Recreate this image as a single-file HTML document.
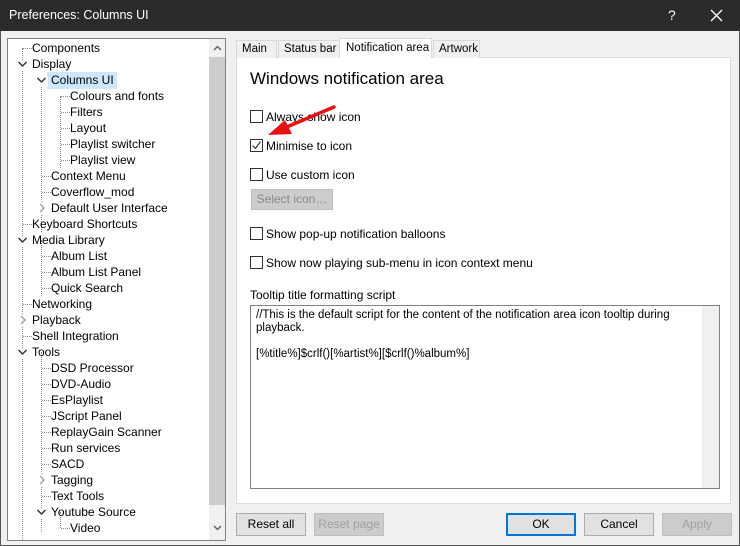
<!DOCTYPE html>
<html><head><style>
*{margin:0;padding:0;box-sizing:border-box}
body{width:740px;height:546px;background:#f0f0f0;font-family:"Liberation Sans",sans-serif;font-size:12px;color:#000;position:relative;overflow:hidden}
.title{position:absolute;left:0;top:0;width:740px;height:31px;background:#2b2b2b;color:#fff;font-size:12.5px}
.abs{position:absolute;white-space:nowrap}
.tree{position:absolute;left:7px;top:38px;width:219px;height:503px;border:1px solid #828282;background:#fff;overflow:hidden}
.ti{position:absolute;white-space:nowrap;height:16px;line-height:16px}
.sb{position:absolute;left:201px;top:0;width:17px;height:501px;background:#f0f0f0}
.tabpage{position:absolute;left:236px;top:57px;width:495px;height:447px;background:#fff;border:1px solid #d9d9d9}
.tab{position:absolute;top:40px;height:18px;border:1px solid #d9d9d9;border-bottom:none;background:#f0f0f0;line-height:17px;padding-left:5px;white-space:nowrap;font-size:11.5px}
.cb{position:absolute;width:13px;height:13px;border:1px solid #333;background:#fff}
.btn{position:absolute;top:513px;width:70px;height:23px;border:1px solid #adadad;background:#e1e1e1;text-align:center;line-height:21px}
.dis{color:#a0a0a0;border-color:#bfbfbf;background:#cccccc}
.dl{position:absolute;border-left:1px dotted #888}
.dh{position:absolute;border-top:1px dotted #888}
</style></head><body>
<div class="title"><span class="abs" style="left:9px;top:8px">Preferences: Columns UI</span>
<span class="abs" style="left:668px;top:7px;font-size:14px">?</span>
<svg class="abs" style="left:710px;top:9px" width="13" height="13"><path d="M1 1L12 12M12 1L1 12" stroke="#fff" stroke-width="1.3"/></svg></div>
<div style="position:absolute;left:0;top:31px;width:1px;height:515px;background:#555"></div>
<div style="position:absolute;right:0;top:31px;width:1px;height:515px;background:#555"></div>
<div style="position:absolute;left:0;bottom:0;width:740px;height:1px;background:#555"></div>

<div class="tree">
<div class="dl" style="left:14px;top:9px;height:492px"></div>
<div class="dl" style="left:33px;top:41px;height:152px"></div>
<div class="dl" style="left:52px;top:57px;height:72px"></div>
<div class="dl" style="left:33px;top:201px;height:56px"></div>
<div class="dl" style="left:33px;top:313px;height:180px"></div>
<div class="dl" style="left:52px;top:473px;height:16px"></div>
<div class="dh" style="left:15px;top:9px;width:9px"></div>
<div class="dh" style="left:53px;top:57px;width:9px"></div><div class="dh" style="left:53px;top:73px;width:9px"></div><div class="dh" style="left:53px;top:89px;width:9px"></div><div class="dh" style="left:53px;top:105px;width:9px"></div><div class="dh" style="left:53px;top:121px;width:9px"></div>
<div class="dh" style="left:34px;top:137px;width:9px"></div><div class="dh" style="left:34px;top:153px;width:9px"></div>
<div class="dh" style="left:15px;top:185px;width:9px"></div><div class="dh" style="left:15px;top:265px;width:9px"></div><div class="dh" style="left:15px;top:297px;width:9px"></div>
<div class="dh" style="left:34px;top:217px;width:9px"></div><div class="dh" style="left:34px;top:233px;width:9px"></div><div class="dh" style="left:34px;top:249px;width:9px"></div>
<div class="dh" style="left:34px;top:329px;width:9px"></div><div class="dh" style="left:34px;top:345px;width:9px"></div><div class="dh" style="left:34px;top:361px;width:9px"></div><div class="dh" style="left:34px;top:377px;width:9px"></div><div class="dh" style="left:34px;top:393px;width:9px"></div><div class="dh" style="left:34px;top:409px;width:9px"></div><div class="dh" style="left:34px;top:425px;width:9px"></div><div class="dh" style="left:34px;top:457px;width:9px"></div><div class="dh" style="left:53px;top:489px;width:9px"></div>
<div style="position:absolute;left:39px;top:33px;width:70px;height:17px;background:#cce8ff"></div>
<div class="ti" style="left:24px;top:1px">Components</div>
<div class="ti" style="left:24px;top:17px">Display</div>
<div class="ti" style="left:43px;top:33px">Columns UI</div>
<div class="ti" style="left:62px;top:49px">Colours and fonts</div>
<div class="ti" style="left:62px;top:65px">Filters</div>
<div class="ti" style="left:62px;top:81px">Layout</div>
<div class="ti" style="left:62px;top:97px">Playlist switcher</div>
<div class="ti" style="left:62px;top:113px">Playlist view</div>
<div class="ti" style="left:43px;top:129px">Context Menu</div>
<div class="ti" style="left:43px;top:145px">Coverflow_mod</div>
<div class="ti" style="left:43px;top:161px">Default User Interface</div>
<div class="ti" style="left:24px;top:177px">Keyboard Shortcuts</div>
<div class="ti" style="left:24px;top:193px">Media Library</div>
<div class="ti" style="left:43px;top:209px">Album List</div>
<div class="ti" style="left:43px;top:225px">Album List Panel</div>
<div class="ti" style="left:43px;top:241px">Quick Search</div>
<div class="ti" style="left:24px;top:257px">Networking</div>
<div class="ti" style="left:24px;top:273px">Playback</div>
<div class="ti" style="left:24px;top:289px">Shell Integration</div>
<div class="ti" style="left:24px;top:305px">Tools</div>
<div class="ti" style="left:43px;top:321px">DSD Processor</div>
<div class="ti" style="left:43px;top:337px">DVD-Audio</div>
<div class="ti" style="left:43px;top:353px">EsPlaylist</div>
<div class="ti" style="left:43px;top:369px">JScript Panel</div>
<div class="ti" style="left:43px;top:385px">ReplayGain Scanner</div>
<div class="ti" style="left:43px;top:401px">Run services</div>
<div class="ti" style="left:43px;top:417px">SACD</div>
<div class="ti" style="left:43px;top:433px">Tagging</div>
<div class="ti" style="left:43px;top:449px">Text Tools</div>
<div class="ti" style="left:43px;top:465px">Youtube Source</div>
<div class="ti" style="left:62px;top:481px">Video</div>
<div style="position:absolute;left:9px;top:21px;width:12px;height:10px;background:#fff"></div>
<div style="position:absolute;left:28px;top:37px;width:12px;height:10px;background:#fff"></div>
<div style="position:absolute;left:9px;top:197px;width:12px;height:10px;background:#fff"></div>
<div style="position:absolute;left:9px;top:309px;width:12px;height:10px;background:#fff"></div>
<div style="position:absolute;left:28px;top:469px;width:12px;height:10px;background:#fff"></div>
<div style="position:absolute;left:29px;top:164px;width:10px;height:12px;background:#fff"></div>
<div style="position:absolute;left:10px;top:276px;width:10px;height:12px;background:#fff"></div>
<div style="position:absolute;left:29px;top:436px;width:10px;height:12px;background:#fff"></div>
<svg class="abs" style="left:0;top:0" width="200" height="500">
<g fill="none" stroke="#333" stroke-width="1.5">
<path d="M10.5 23l4 4 4-4M29.5 39l4 4 4-4M10.5 199l4 4 4-4M10.5 311l4 4 4-4M29.5 471l4 4 4-4"/></g>
<g fill="none" stroke="#a6a6a6" stroke-width="1.5"><path d="M32 165l4 4-4 4M13 277l4 4-4 4M32 437l4 4-4 4"/></g></svg>
<div class="sb"><div style="position:absolute;left:0;top:18px;width:17px;height:448px;background:#cdcdcd"></div>
<svg class="abs" style="left:4px;top:6px" width="9" height="6"><path d="M1 5l3.5-3.5L8 5" stroke="#555" stroke-width="1.3" fill="none"/></svg>
<svg class="abs" style="left:4px;top:486px" width="9" height="6"><path d="M1 1l3.5 3.5L8 1" stroke="#555" stroke-width="1.3" fill="none"/></svg></div>
</div>

<div class="tabpage"></div>
<div class="tab" style="left:236px;width:41px">Main</div>
<div class="tab" style="left:278px;width:62px">Status bar</div>
<div class="tab" style="left:339px;top:38px;height:20px;width:93px;background:#fff;line-height:18px;padding-left:6px;border-bottom:none">Notification area</div>
<div class="tab" style="left:433px;width:47px">Artwork</div>

<div class="abs" style="left:250px;top:69px;font-size:17px">Windows notification area</div>
<div class="cb" style="left:250px;top:110px"></div><div class="abs" style="left:266px;top:110px">Always show icon</div>
<div class="cb" style="left:250px;top:139px"></div>
<svg class="abs" style="left:251px;top:140px" width="11" height="11"><path d="M1.5 5.5l3 3 5-7" stroke="#333" stroke-width="1.2" fill="none"/></svg>
<div class="abs" style="left:266px;top:139px">Minimise to icon</div>
<div class="cb" style="left:250px;top:168px"></div><div class="abs" style="left:266px;top:168px">Use custom icon</div>
<div class="abs" style="left:251px;top:189px;width:82px;height:21px;background:#cccccc;border:1px solid #bfbfbf;color:#8a8a8a;text-align:center;line-height:19px">Select icon…</div>
<div class="cb" style="left:250px;top:227px"></div><div class="abs" style="left:266px;top:227px">Show pop-up notification balloons</div>
<div class="cb" style="left:250px;top:256px"></div><div class="abs" style="left:266px;top:256px">Show now playing sub-menu in icon context menu</div>
<svg class="abs" style="left:260px;top:100px" width="80" height="45"><path d="M74 7L22 29" stroke="#e81010" stroke-width="3.5" stroke-linecap="round"/><path d="M8 35L25 20 32 34Z" fill="#e81010"/></svg>
<div class="abs" style="left:250px;top:288px">Tooltip title formatting script</div>
<div class="abs" style="left:250px;top:305px;width:470px;height:184px;border:1px solid #828282;background:#fff;padding:3px 5px;line-height:13px;white-space:normal;font-size:11.5px">//This is the default script for the content of the notification area icon tooltip during playback.<br><br>[%title%]$crlf()[%artist%][$crlf()%album%]
<div style="position:absolute;right:0;top:0;width:17px;height:182px;background:#f0f0f0"></div></div>

<div class="btn" style="left:236px">Reset all</div>
<div class="btn dis" style="left:314px">Reset page</div>
<div class="btn" style="left:506px;border:2px solid #0078d7;line-height:19px">OK</div>
<div class="btn" style="left:584px">Cancel</div>
<div class="btn dis" style="left:662px">Apply</div>
</body></html>
